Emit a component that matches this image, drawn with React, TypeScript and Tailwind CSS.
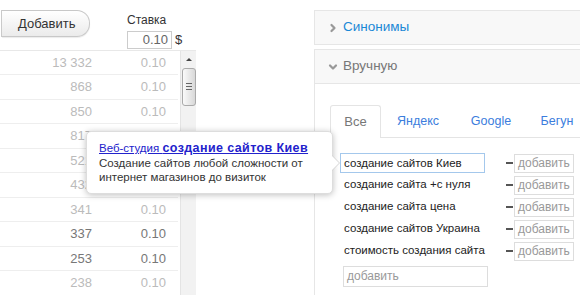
import { ChevronRight, ChevronDown } from 'lucide-react'

// ── Data ───────────────────────────────────────────────────────────
const ROWS = [
  { shows: '13 332', bid: '0.10', dark: false },
  { shows: '868',    bid: '0.10', dark: false },
  { shows: '850',    bid: '0.10', dark: false },
  { shows: '817',    bid: '0.10', dark: false },
  { shows: '521',    bid: '0.10', dark: false },
  { shows: '432',    bid: '0.10', dark: false },
  { shows: '341',    bid: '0.10', dark: false },
  { shows: '337',    bid: '0.10', dark: true },
  { shows: '253',    bid: '0.10', dark: true },
  { shows: '238',    bid: '0.10', dark: false },
]

const KEYWORDS = [
  'создание сайта +с нуля',
  'создание сайта цена',
  'создание сайтов Украина',
  'стоимость создания сайта',
]

const TABS = [
  { label: 'Яндекс', w: 'w-[74px]' },
  { label: 'Google', w: 'w-[72px]' },
  { label: 'Бегун',  w: 'w-[60px]' },
]

function AddBox() {
  return (
    <div className="flex items-center">
      <span className="w-[7px] h-[1.5px] bg-[#555] mr-[1px]" />
      <div className="w-[60px] h-[19px] border border-[#ddd] pl-[3px] text-[12px] leading-[17px] text-[#999]">
        добавить
      </div>
    </div>
  )
}

export default function App() {
  return (
    <div className="relative flex w-[580px] h-[295px] overflow-hidden bg-white font-['Liberation_Sans',Arial,sans-serif]">
      {/* ── Left: bids table ─────────────────────────────── */}
      <div className="w-[196px] flex flex-col flex-shrink-0">
        <div className="h-[53px] flex items-start">
          <div className="mt-[10px] h-[27px] w-[2px] border-r border-[#ccc]" />
          <button className="mt-[10px] h-[27px] w-[88px] pl-[16px] text-left text-[13px] text-[#333] border border-l-0 border-[#c8c8c8] rounded-r-[13px] bg-gradient-to-b from-white to-[#ebebeb] shadow-[0_1px_1px_rgba(0,0,0,0.08)]">
            Добавить
          </button>
          <div className="ml-[37px] mt-[13px] flex flex-col">
            <span className="text-[12px] leading-[14px] text-[#333]">Ставка</span>
            <div className="flex items-center mt-[3px]">
              <div className="w-[45px] h-[18px] border border-[#ccc] pr-[3px] text-right text-[13px] leading-[16px] text-[#666]">
                0.10
              </div>
              <span className="ml-[3px] text-[13px] text-[#333]">$</span>
            </div>
          </div>
        </div>

        <div className="flex flex-1 border-t border-[#e8e8e8]">
          <div className="w-[178px] flex flex-col">
            {ROWS.map((r) => (
              <div
                key={r.shows}
                className={`h-[24.5px] flex-shrink-0 flex items-center border-b border-[#eee] text-[13px] ${r.dark ? 'text-[#777]' : 'text-[#bbb]'}`}
              >
                <span className="w-[92px] text-right">{r.shows}</span>
                <span className="w-[74px] text-right">{r.bid}</span>
              </div>
            ))}
          </div>
          {/* Scrollbar */}
          <div className="w-[16px] ml-[2px] bg-[#f2f2f2] border-l border-[#e4e4e4] flex flex-col items-center">
            <div className="h-[17px] flex items-center">
              <span className="w-0 h-0 border-l-[3px] border-r-[3px] border-b-[3px] border-l-transparent border-r-transparent border-b-[#444]" />
            </div>
            <div className="w-[14px] h-[38px] rounded-[3px] border border-[#aaa] bg-gradient-to-r from-[#fafafa] to-[#d8d8d8] flex flex-col items-center justify-center gap-[2px]">
              <span className="w-[6px] h-px bg-[#666]" />
              <span className="w-[6px] h-px bg-[#666]" />
              <span className="w-[6px] h-px bg-[#666]" />
            </div>
          </div>
        </div>
      </div>

      <div className="w-[118px] flex-shrink-0" />

      {/* ── Right: keyword accordion ─────────────────────── */}
      <div className="flex-1 flex flex-col pt-[10px]">
        <div className="h-[35px] flex items-center border border-r-0 border-[#e6e6e6] bg-[#f8f8f8]">
          <ChevronRight className="w-[12px] h-[12px] ml-[12px] text-[#999]" strokeWidth={4.5} />
          <span className="ml-[4px] text-[13.5px] text-[#1a88d6]">Синонимы</span>
        </div>
        <div className="mt-[4px] h-[35px] flex items-center border border-r-0 border-[#e6e6e6] bg-[#f8f8f8]">
          <ChevronDown className="w-[12px] h-[12px] ml-[12px] text-[#999]" strokeWidth={4.5} />
          <span className="ml-[4px] text-[13.5px] text-[#777]">Вручную</span>
        </div>

        <div className="flex-1 border-l border-[#e6e6e6] pt-[21px]">
          {/* Tabs */}
          <div className="flex items-end h-[33px] pl-[15px]">
            <div className="w-[51px] h-[33px] border border-b-0 border-[#e4e4e4] rounded-t-[3px] flex items-center justify-center text-[13px] text-[#777]">
              Все
            </div>
            <div className="flex-1 h-[33px] flex border-b border-[#e4e4e4]">
              {TABS.map((t) => (
                <div key={t.label} className={`${t.w} flex items-center justify-center text-[12.5px] text-[#3b7ddd]`}>
                  {t.label}
                </div>
              ))}
            </div>
          </div>

          {/* Keyword list */}
          <div className="pl-[25px] pt-[15px] flex flex-col">
            <div className="flex items-center h-[20px]">
              <div className="w-[145px] h-[20px] border border-[#a4c8ec] pl-[3px] text-[11.5px] leading-[18px] text-[#222]">
                создание сайтов Киев
              </div>
              <div className="ml-[21px]"><AddBox /></div>
            </div>
            {KEYWORDS.map((k) => (
              <div key={k} className="flex items-center h-[20px] mt-[2px]">
                <span className="w-[145px] pl-[4px] text-[11.5px] text-[#222] whitespace-nowrap">{k}</span>
                <div className="ml-[21px]"><AddBox /></div>
              </div>
            ))}
            <div className="mt-[5px] ml-[3px] w-[145px] h-[21px] border border-[#ddd] pl-[3px] text-[12px] leading-[19px] text-[#999]">
              добавить
            </div>
          </div>
        </div>
      </div>

      {/* ── Tooltip over the table ───────────────────────── */}
      <div className="absolute left-[86px] top-[131px] w-[247px] h-[63px] bg-white rounded-[5px] border border-[#ddd] shadow-[0_1px_6px_rgba(0,0,0,0.25)] pl-[12px] pt-[9px] text-[11.5px] leading-[14.5px]">
        <a className="block whitespace-nowrap text-[#2222cc] underline">
          Веб-студия <span className="font-bold text-[12.5px] tracking-[0.4px]">создание сайтов Киев</span>
        </a>
        <p className="text-[#333]">
          Создание сайтов любой сложности от<br />интернет магазинов до визиток
        </p>
        <span className="absolute right-[-8px] top-[23px] w-0 h-0 border-t-[8px] border-b-[8px] border-l-[8px] border-t-transparent border-b-transparent border-l-[#d4d4d4]" />
        <span className="absolute right-[-7px] top-[24px] w-0 h-0 border-t-[7px] border-b-[7px] border-l-[7px] border-t-transparent border-b-transparent border-l-white" />
      </div>
    </div>
  )
}
